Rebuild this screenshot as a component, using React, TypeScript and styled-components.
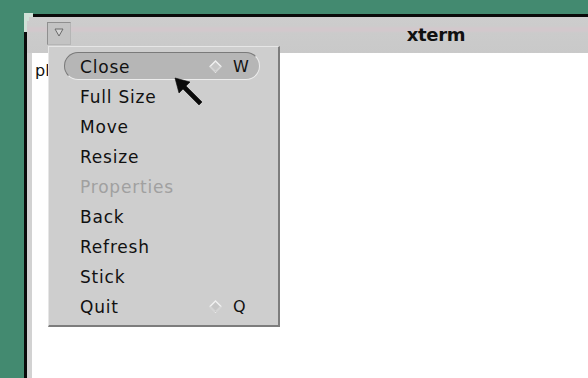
import React from "react";
import styled, { createGlobalStyle } from "styled-components";

const Global = createGlobalStyle`
  html, body { margin: 0; padding: 0; background: #438a70; overflow: hidden; }
  #root { width: 588px; height: 378px; }
`;

const Desktop = styled.div`
  position: relative;
  width: 588px;
  height: 378px;
  overflow: hidden;
  background: #438a70;
  padding: 14px 0 0 24px;
  box-sizing: border-box;
`;

const Corner = styled.svg`
  position: absolute;
  left: 24px;
  top: 13px;
`;

const Window = styled.div`
  width: 821px;
  height: 400px;
  border-top: 3px solid #0a0a0a;
  border-left: 3px solid #0a0a0a;
  display: flex;
  flex-direction: column;
  box-sizing: border-box;
`;

const TitleBar = styled.div`
  height: 36px;
  display: grid;
  grid-template-columns: 1fr;
  align-items: start;
  background: linear-gradient(
    to bottom,
    #cdcdcd 0px,
    #cccccc 9px,
    #d2c8cc 11px,
    #d2c8cc 14px,
    #cbcbcb 16px,
    #c9c9c9 36px
  );
`;

const MenuButton = styled.div`
  grid-area: 1 / 1;
  justify-self: start;
  margin: 5px 0 0 20px;
  width: 24px;
  height: 23px;
  box-sizing: border-box;
  border: 1px solid #8f8f8f;
  border-right-color: #b5b5b5;
  border-bottom-color: #b5b5b5;
  background: #c3c3c3;
  display: flex;
  justify-content: center;
  padding-top: 5px;
`;

const Title = styled.div`
  grid-area: 1 / 1;
  justify-self: center;
  font-family: "DejaVu Sans", sans-serif;
  font-weight: bold;
  font-size: 18px;
  line-height: 36px;
  color: #111;
  letter-spacing: -0.3px;
`;

const Body = styled.div`
  flex: 1;
  display: flex;
`;

const SideStrip = styled.div`
  width: 5px;
  background: #d2d2d2;
`;

const Content = styled.div`
  flex: 1;
  background: #ffffff;
  padding: 8px 0 0 3px;
  font-family: "DejaVu Sans", sans-serif;
  font-size: 16px;
  color: #111;
`;

const Menu = styled.div`
  position: absolute;
  left: 48px;
  top: 46px;
  width: 232px;
  height: 281px;
  box-sizing: border-box;
  background: #cecece;
  border-top: 1px solid #e6e6e6;
  border-left: 1px solid #e6e6e6;
  border-right: 2px solid #7d7d7d;
  border-bottom: 2px solid #7d7d7d;
  padding: 5px 18px 0 15px;
  display: flex;
  flex-direction: column;
  gap: 2px;
`;

const Item = styled.div<{ $active?: boolean; $disabled?: boolean }>`
  height: 28px;
  box-sizing: border-box;
  border-radius: 14px;
  border: 1px solid transparent;
  ${(p) =>
    p.$active
      ? `
    background: #b6b6b6;
    border-top-color: #7a7a7a;
    border-left-color: #7a7a7a;
    border-right-color: #ececec;
    border-bottom-color: #ececec;
  `
      : ""}
  display: flex;
  align-items: center;
  padding: 1px 10px 0 15px;
  font-family: "DejaVu Sans", sans-serif;
  font-size: 17px;
  letter-spacing: 0.8px;
  color: ${(p) => (p.$disabled ? "#a0a0a0" : "#111111")};
`;

const Label = styled.span`
  flex: 1;
`;

const Shortcut = styled.span`
  display: flex;
  align-items: center;
  gap: 11px;
  font-size: 16px;
  letter-spacing: 0;
`;

const KeyLetter = styled.span`
  width: 16px;
`;

const Cursor = styled.svg`
  position: absolute;
  left: 174px;
  top: 77px;
`;

const Diamond = () => (
  <svg width="13" height="13" viewBox="0 0 13 13">
    <polygon points="6.5,1 12,6.5 6.5,12 1,6.5" fill="#c6c6c6" stroke="#f2f2f2" strokeWidth="1.4" />
    <polyline points="12,6.5 6.5,12 1,6.5" fill="none" stroke="#b0b0b0" strokeWidth="0.8" />
  </svg>
);

const Triangle = () => (
  <svg width="10" height="9" viewBox="0 0 10 9">
    <polygon points="1,1 9,1 5,8" fill="#d4d4d4" stroke="#6a6a6a" strokeWidth="1" />
  </svg>
);

const items: { label: string; key?: string; active?: boolean; disabled?: boolean }[] = [
  { label: "Close", key: "W", active: true },
  { label: "Full Size" },
  { label: "Move" },
  { label: "Resize" },
  { label: "Properties", disabled: true },
  { label: "Back" },
  { label: "Refresh" },
  { label: "Stick" },
  { label: "Quit", key: "Q" },
];

export default function App() {
  return (
    <>
      <Global />
      <Desktop>
        <Window>
          <TitleBar>
            <MenuButton>
              <Triangle />
            </MenuButton>
            <Title>xterm</Title>
          </TitleBar>
          <Body>
            <SideStrip />
            <Content>pl</Content>
          </Body>
        </Window>
        <Corner width="10" height="20" viewBox="0 0 10 20">
          <polygon points="0,0 9,0 9,4 5,4 5,8 3,8 3,19 0,19" fill="#cfe1d7" />
        </Corner>
        <Menu>
          {items.map((it) => (
            <Item key={it.label} $active={it.active} $disabled={it.disabled}>
              <Label>{it.label}</Label>
              {it.key && (
                <Shortcut>
                  <Diamond />
                  <KeyLetter>{it.key}</KeyLetter>
                </Shortcut>
              )}
            </Item>
          ))}
        </Menu>
        <Cursor width="30" height="30" viewBox="0 0 30 30">
          <polygon
            points="1,1 16,5 12,9 28,25 25,28 9,12 5,16"
            fill="#0a0a0a"
            stroke="#0a0a0a"
            strokeWidth="0.6"
            strokeLinejoin="round"
          />
        </Cursor>
      </Desktop>
    </>
  );
}
